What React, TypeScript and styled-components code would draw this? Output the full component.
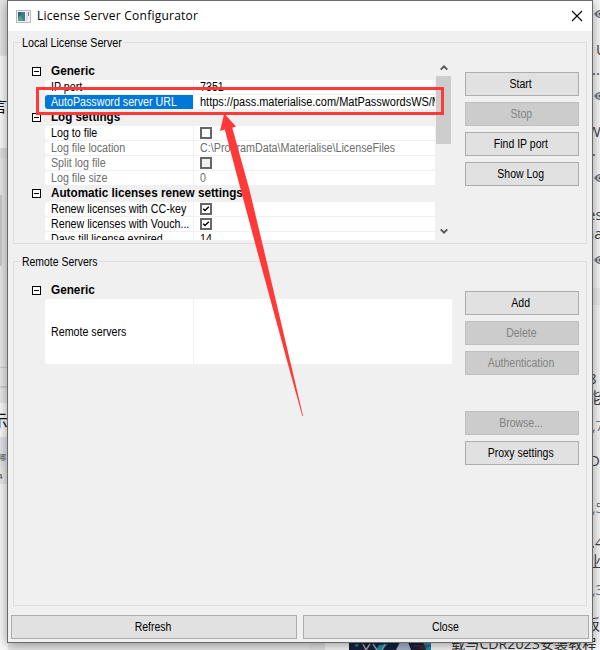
import React from "react";
import styled, { createGlobalStyle, css } from "styled-components";

const GlobalStyle = createGlobalStyle`
  * { box-sizing: border-box; }
  html, body { margin: 0; padding: 0; }
  body { width: 600px; height: 650px; overflow: hidden; background: #e9e9e9; }
`;

const Desktop = styled.div`
  position: relative;
  width: 600px;
  height: 650px;
  overflow: hidden;
  padding: 0 7px 7px;
  background: #ededed;
  font-family: "Liberation Sans", "Noto Sans CJK SC", sans-serif;
  font-size: 12px;
  color: #000;
`;

/* Browser page that peeks out around the dialog */
const Patch = styled.div<{ $x: number; $y: number; $w: number; $h: number; $c: string }>`
  position: absolute;
  left: ${(p) => p.$x}px;
  top: ${(p) => p.$y}px;
  width: ${(p) => p.$w}px;
  height: ${(p) => p.$h}px;
  background: ${(p) => p.$c};
`;

const PageText = styled.span<{ $x: number; $y: number; $size?: number; $c?: string }>`
  position: absolute;
  left: ${(p) => p.$x}px;
  top: ${(p) => p.$y}px;
  font: ${(p) => p.$size ?? 15}px/18px "Open Sans", "Noto Sans CJK SC", sans-serif;
  color: ${(p) => p.$c ?? "#444"};
  white-space: nowrap;
`;

const Eye = styled.svg<{ $y: number }>`
  position: absolute;
  left: 594px;
  top: ${(p) => p.$y}px;
`;

const Thumb = styled.svg`
  position: absolute;
  left: 349px;
  top: 642px;
`;

const Window = styled.main`
  position: relative;
  width: 586px;
  height: 643px;
  display: flex;
  flex-direction: column;
  background: #f0f0f0;
  border: 1px solid #6b6b6b;
  box-shadow: 0 2px 12px rgba(0, 0, 0, 0.42);
`;

const TitleBar = styled.header`
  height: 30px;
  flex: none;
  display: flex;
  align-items: center;
  gap: 6px;
  padding: 0 9px 0 8px;
  background: #fff;
`;

const Title = styled.h1`
  flex: 1;
  margin: 0;
  font: 400 12px/16px "Open Sans", "Noto Sans", sans-serif;
  letter-spacing: 0.24px;
`;

const Content = styled.div`
  height: 575px;
  padding: 11px 5px 0;
  display: flex;
  flex-direction: column;
  gap: 17px;
`;

const Group = styled.section<{ $h: number }>`
  height: ${(p) => p.$h}px;
  border: 1px solid #dcdcdc;
  display: grid;
  grid-template-rows: 16px 1fr;
  grid-template-columns: 438px 114px;
  column-gap: 13px;
`;

const Legend = styled.h2<{ $w: number }>`
  grid-column: 1 / -1;
  width: ${(p) => p.$w}px;
  margin: -8px 0 0 6px;
  height: 16px;
  padding: 0 0 0 2px;
  line-height: 16px;
  font-size: 12px;
  font-weight: 400;
  background: #f0f0f0;
`;

const Fit = styled.span<{ $s?: number; $center?: boolean }>`
  display: inline-block;
  white-space: nowrap;
  transform: scaleX(${(p) => p.$s ?? 0.89});
  transform-origin: ${(p) => (p.$center ? "center" : "left")};
`;

const GridArea = styled.div`
  display: flex;
  height: 181px;
  overflow: hidden;
`;

const PropertyGrid = styled.div<{ $w: number }>`
  width: ${(p) => p.$w}px;
  padding-left: 17px;
  overflow: hidden;
`;

const Category = styled.div<{ $h: number; $top?: number }>`
  height: ${(p) => p.$h}px;
  padding: ${(p) => p.$top ?? 0}px 0 ${(p) => (p.$top ? 0 : 1)}px 1px;
  display: flex;
  align-items: center;
  gap: 10px;
  font-weight: 700;
  line-height: 15px;
`;

const Row = styled.div<{ $selected?: boolean; $disabled?: boolean; $h?: number }>`
  height: ${(p) => p.$h ?? 15}px;
  margin-left: 14px;
  display: grid;
  grid-template-columns: 148px 1fr;
  column-gap: 1px;
  border-bottom: 1px solid #f0f0f0;
  color: ${(p) => (p.$disabled ? "#6d6d6d" : "#000")};
  ${(p) =>
    p.$selected &&
    css`
      & > :first-child {
        background: #0078d7;
        color: #fff;
      }
    `}
`;

const Cell = styled.div`
  display: flex;
  align-items: center;
  min-width: 0;
  padding-left: 6px;
  line-height: 14px;
  overflow: hidden;
  background: #fff;
  &:first-child {
    border-radius: 3px 0 0 3px;
  }
`;

const Check = styled.span<{ $disabled?: boolean }>`
  width: 12px;
  height: 12px;
  flex: none;
  display: flex;
  border: 2px solid #666;
  background: ${(p) => (p.$disabled ? "#f0f0f0" : "#fff")};
`;

const ScrollBar = styled.div`
  width: 17px;
  height: 181px;
  padding: 5px 0 5px 1px;
  display: flex;
  flex-direction: column;
  align-items: center;
  justify-content: space-between;
`;

const ScrollThumb = styled.div`
  width: 15px;
  height: 68px;
  margin: 4px 1px 84px 0;
  background: #cdcdcd;
`;

const Buttons = styled.div<{ $top: number }>`
  display: flex;
  flex-direction: column;
  gap: 6px;
  padding-top: ${(p) => p.$top}px;
`;

const Button = styled.button<{ $gap?: number }>`
  height: 24px;
  flex: none;
  margin: ${(p) => p.$gap ?? 0}px 0 0;
  padding: 0 2px 0 0;
  font: 12px/20px "Liberation Sans", sans-serif;
  color: #000;
  background: #e1e1e1;
  border: 1px solid #adadad;
  &:disabled {
    color: #838383;
    background: #ccc;
    border-color: #bfbfbf;
  }
`;

const Footer = styled.footer`
  display: grid;
  grid-template-columns: 286px 286px;
  column-gap: 6px;
  padding: 9px 0 0 3px;
`;

const Marker = styled.div`
  position: absolute;
  left: 36px;
  top: 87px;
  width: 408px;
  height: 28px;
  border: 3px solid #ff3937;
`;

const Arrow = styled.svg`
  position: absolute;
  left: 0;
  top: 0;
  pointer-events: none;
`;

const AppIcon = () => (
  <svg width="15" height="13" viewBox="0 0 15 13">
    <rect x=".5" y=".5" width="14" height="12" fill="#f2f2f2" stroke="#b4bcc2" />
    <rect x="2" y="2" width="7" height="9" fill="#3d7a94" />
    <path d="M2 2h3v9H2z" fill="#2d6474" />
    <path d="M4 5l4 6H2V8z" fill="#57a07c" />
    <path d="M10 2h1.5v9H10z" fill="#d5dbe0" />
    <path d="M12 2h1v4h-1z" fill="#6d7f92" />
  </svg>
);

const CloseIcon = () => (
  <svg width="12" height="12" viewBox="0 0 12 12" stroke="#000" strokeWidth="1.1">
    <path d="M1 1l10 10M11 1L1 11" />
  </svg>
);

const Minus = () => (
  <svg width="9" height="9" viewBox="0 0 9 9" shapeRendering="crispEdges">
    <rect x=".5" y=".5" width="8" height="8" fill="#fff" stroke="#000" />
    <path d="M2 4.5h5" stroke="#000" />
  </svg>
);

const Tick = () => (
  <svg width="8" height="8" viewBox="0 0 8 8" fill="none" stroke="#000" strokeWidth="1.4">
    <path d="M1.2 3.8l1.8 1.8L6.8 1.8" />
  </svg>
);

const Chevron = ({ down }: { down?: boolean }) => (
  <svg width="8" height="7" viewBox="0 0 8 7" fill="none" stroke="#555" strokeWidth="1.9">
    <path d={down ? "M.7 1.3L4 4.7l3.3-3.4" : "M.7 5.7L4 2.3l3.3 3.4"} />
  </svg>
);

type Prop = { name: string; value?: string; check?: boolean; disabled?: boolean; selected?: boolean; s?: number };

const Property = ({ name, value, check, disabled, selected, s }: Prop) => (
  <Row $disabled={disabled} $selected={selected}>
    <Cell>
      <Fit>{name}</Fit>
    </Cell>
    <Cell>
      {check === undefined ? <Fit $s={s}>{value}</Fit> : <Check $disabled={disabled}>{check && <Tick />}</Check>}
    </Cell>
  </Row>
);

const Action = ({ label, disabled, gap }: { label: string; disabled?: boolean; gap?: number }) => (
  <Button disabled={disabled} $gap={gap}>
    <Fit $s={0.875} $center>
      {label}
    </Fit>
  </Button>
);

const Backdrop = () => (
  <>
    <Patch $x={0} $y={0} $w={8} $h={55} $c="#e8e8e8" />
    <Patch $x={0} $y={56} $w={8} $h={92} $c="#fff" />
    <Patch $x={0} $y={148} $w={8} $h={10} $c="#e3e3e3" />
    <Patch $x={0} $y={158} $w={8} $h={200} $c="#ececec" />
    <Patch $x={0} $y={195} $w={2} $h={71} $c="#cbcbcb" />
    <Patch $x={0} $y={367} $w={8} $h={1} $c="#d2d2d2" />
    <Patch $x={0} $y={386} $w={8} $h={2} $c="#d5d5d5" />
    <Patch $x={0} $y={403} $w={8} $h={34} $c="#fff" />
    <Patch $x={0} $y={437} $w={8} $h={30} $c="#e6e8ee" />
    <Patch $x={0} $y={484} $w={8} $h={166} $c="#fcfcfc" />
    <PageText $x={-9} $y={97} $size={16} $c="#111">言</PageText>
    <PageText $x={-9} $y={412} $size={17} $c="#111">示</PageText>
    <PageText $x={-1} $y={449} $size={7} $c="#555">哪</PageText>
    <PageText $x={-2} $y={467} $size={8} $c="#333">4</PageText>
    <Patch $x={592} $y={0} $w={8} $h={650} $c="#fafafa" />
    <Patch $x={592} $y={288} $w={8} $h={17} $c="#eee" />
    {[9, 91, 173, 255].map((y) => (
      <Eye key={y} $y={y} width="12" height="10" viewBox="0 0 12 10">
        <path d="M0 5Q6-3 12 5Q6 13 0 5" fill="#6f777e" />
        <circle cx="6" cy="5" r="2.8" fill="#ddd" />
        <circle cx="6" cy="5" r="1.5" fill="#59626a" />
      </Eye>
    ))}
    <PageText $x={596} $y={40}>U</PageText>
    <PageText $x={592} $y={60}>...</PageText>
    <PageText $x={587} $y={122}>W</PageText>
    <PageText $x={592} $y={141}>.</PageText>
    <PageText $x={587} $y={205}>es</PageText>
    <PageText $x={585} $y={224}>na</PageText>
    <PageText $x={588} $y={369}>8</PageText>
    <PageText $x={586} $y={388}>能</PageText>
    <PageText $x={592} $y={417} $size={14} $c="#747b84">,7</PageText>
    <PageText $x={589} $y={451}>D</PageText>
    <PageText $x={592} $y={499} $size={14} $c="#747b84">,5</PageText>
    <PageText $x={591} $y={533}>.4</PageText>
    <PageText $x={586} $y={552}>业</PageText>
    <PageText $x={592} $y={581} $size={14} $c="#747b84">,3</PageText>
    <PageText $x={585} $y={615}>板</PageText>
    <Patch $x={310} $y={640} $w={15} $h={10} $c="#e6e6e6" />
    <Patch $x={325} $y={640} $w={267} $h={10} $c="#fafafa" />
    <PageText $x={451} $y={635} $size={14.2} $c="#333">载与CDR2023安装教程</PageText>
    <Thumb width="82" height="8" viewBox="0 0 82 8">
      <path d="M0 0h82v8H0z" fill="#17213b" />
      <path d="M5 3l5-1-2 3zM30 3l9-1-6 6h-6zM74 0h8v8h-5z" fill="#1593b8" />
      <path d="M14 2l3 6M21 2l-4 6M24 2l4 6M36 2l-3 6" stroke="#a9a39b" strokeWidth="1.5" />
      <path d="M47 8l4-8h8l3 8z" fill="#a8b8cc" />
      <path d="M64 4h18M70 6h8" stroke="#80242e" />
    </Thumb>
  </>
);

export default function App() {
  return (
    <>
      <GlobalStyle />
      <Desktop>
        <Backdrop />
        <Window>
          <TitleBar>
            <AppIcon />
            <Title>License Server Configurator</Title>
            <CloseIcon />
          </TitleBar>
          <Content>
            <Group $h={202}>
              <Legend $w={104}>
                <Fit>Local License Server</Fit>
              </Legend>
              <GridArea>
                <PropertyGrid $w={421}>
                  <Category $h={21} $top={3}>
                    <Minus />
                    <Fit $s={0.98}>Generic</Fit>
                  </Category>
                  <Property name="IP port" value="7351" />
                  <Property name="AutoPassword server URL" value="https://pass.materialise.com/MatPasswordsWS/MatPasswords" selected s={0.915} />
                  <Category $h={16}>
                    <Minus />
                    <Fit $s={0.97}>Log settings</Fit>
                  </Category>
                  <Property name="Log to file" check={false} />
                  <Property name="Log file location" value="C:\ProgramData\Materialise\LicenseFiles" disabled s={0.895} />
                  <Property name="Split log file" check={false} disabled />
                  <Property name="Log file size" value="0" disabled />
                  <Category $h={16}>
                    <Minus />
                    <Fit $s={0.975}>Automatic licenses renew settings</Fit>
                  </Category>
                  <Property name="Renew licenses with CC-key" check />
                  <Property name="Renew licenses with Vouch..." check />
                  <Property name="Days till license expired" value="14" />
                </PropertyGrid>
                <ScrollBar>
                  <Chevron />
                  <ScrollThumb />
                  <Chevron down />
                </ScrollBar>
              </GridArea>
              <Buttons $top={13}>
                <Action label="Start" />
                <Action label="Stop" disabled />
                <Action label="Find IP port" />
                <Action label="Show Log" />
              </Buttons>
            </Group>
            <Group $h={345}>
              <Legend $w={79}>
                <Fit $s={0.87}>Remote Servers</Fit>
              </Legend>
              <PropertyGrid $w={438}>
                <Category $h={21} $top={3}>
                  <Minus />
                  <Fit $s={0.98}>Generic</Fit>
                </Category>
                <Row $h={66}>
                  <Cell>
                    <Fit>Remote servers</Fit>
                  </Cell>
                  <Cell />
                </Row>
              </PropertyGrid>
              <Buttons $top={13}>
                <Action label="Add" />
                <Action label="Delete" disabled />
                <Action label="Authentication" disabled />
                <Action label="Browse..." disabled gap={30} />
                <Action label="Proxy settings" />
              </Buttons>
            </Group>
          </Content>
          <Footer>
            <Action label="Refresh" />
            <Action label="Close" />
          </Footer>
        </Window>
        <Marker />
        <Arrow width="600" height="650" viewBox="0 0 600 650">
          <path
            d="M224.2 113.5L236 126.5 232.3 127.8 249.5 190 266.3 260 290.6 363 303 415.8 302.3 416 287.6 363 259.6 260 240.8 190 224.8 129.6 220 131z"
            fill="#ff3937"
          />
        </Arrow>
      </Desktop>
    </>
  );
}
